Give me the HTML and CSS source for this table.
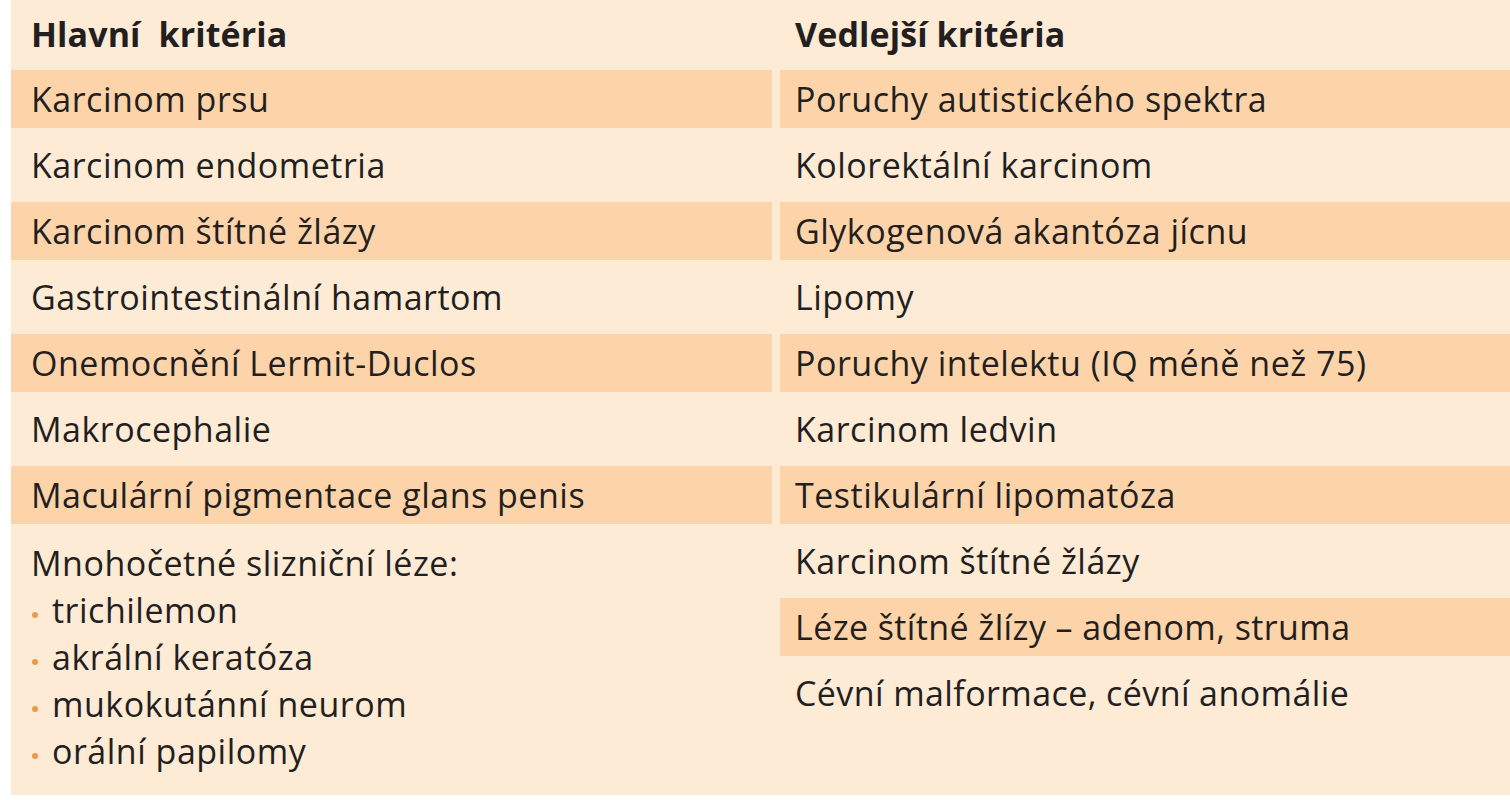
FILE: index.html
```html
<!DOCTYPE html>
<html lang="cs">
<head>
<meta charset="utf-8">
<title>Kritéria</title>
<link rel="stylesheet" href="styles.css">
</head>
<body>
<div class="sheet">
  <div class="col col-left">
    <div class="cell head">Hlavní&nbsp; kritéria</div>
    <div class="cell stripe">Karcinom prsu</div>
    <div class="cell">Karcinom endometria</div>
    <div class="cell stripe">Karcinom štítné žlázy</div>
    <div class="cell">Gastrointestinální hamartom</div>
    <div class="cell stripe">Onemocnění Lermit-Duclos</div>
    <div class="cell">Makrocephalie</div>
    <div class="cell stripe">Maculární pigmentace glans penis</div>
    <div class="cell tall">
      <div class="line">Mnohočetné slizniční léze:</div>
      <ul class="bullets">
        <li>trichilemon</li>
        <li>akrální keratóza</li>
        <li>mukokutánní neurom</li>
        <li>orální papilomy</li>
      </ul>
    </div>
  </div>
  <div class="col col-right">
    <div class="cell head">Vedlejší kritéria</div>
    <div class="cell stripe">Poruchy autistického spektra</div>
    <div class="cell">Kolorektální karcinom</div>
    <div class="cell stripe">Glykogenová akantóza jícnu</div>
    <div class="cell">Lipomy</div>
    <div class="cell stripe">Poruchy intelektu (IQ méně než 75)</div>
    <div class="cell">Karcinom ledvin</div>
    <div class="cell stripe">Testikulární lipomatóza</div>
    <div class="cell">Karcinom štítné žlázy</div>
    <div class="cell stripe"><span class="narrow">Léze štítné žlízy – adenom, struma</span></div>
    <div class="cell"><span class="narrow">Cévní malformace, cévní anomálie</span></div>
  </div>
</div>
</body>
</html>
```
FILE: styles.css
```css
html, body {
  margin: 0;
  padding: 0;
  background: #ffffff;
  overflow: hidden;
}
body {
  width: 1510px;
  height: 800px;
  font-family: "Open Sans", "Noto Sans", sans-serif;
  font-size: 34px;
  letter-spacing: 0.5px;
  color: #231f20;
}
.sheet {
  margin-left: 11px;
  height: 795px;
  background: #fdebd6;
  display: grid;
  grid-template-columns: 761px 1fr;
  column-gap: 8px;
}
.col {
  display: flex;
  flex-direction: column;
  gap: 8px;
}
.cell {
  height: 58px;
  line-height: 58px;
  white-space: nowrap;
}
.col-left .cell { padding-left: 20px; }
.col-right .cell { padding-left: 15px; }
.stripe { background: #fdd4a9; }
.head {
  height: 62px;
  line-height: 68px;
  font-weight: 700;
  letter-spacing: 0.1px;
}
.tall {
  height: auto;
  flex: 1;
  line-height: 47px;
  padding-top: 8px;
}
.line { height: 47px; }
.bullets {
  list-style: none;
  margin: 0;
  padding: 0;
}
.bullets li {
  position: relative;
  padding-left: 21px;
  height: 47px;
}
.bullets li::before {
  content: "";
  position: absolute;
  left: 1px;
  top: 25px;
  width: 6px;
  height: 6px;
  border-radius: 50%;
  background: #ec9a4a;
}
.narrow {
  display: inline-block;
  letter-spacing: 0.4px;
}
```
